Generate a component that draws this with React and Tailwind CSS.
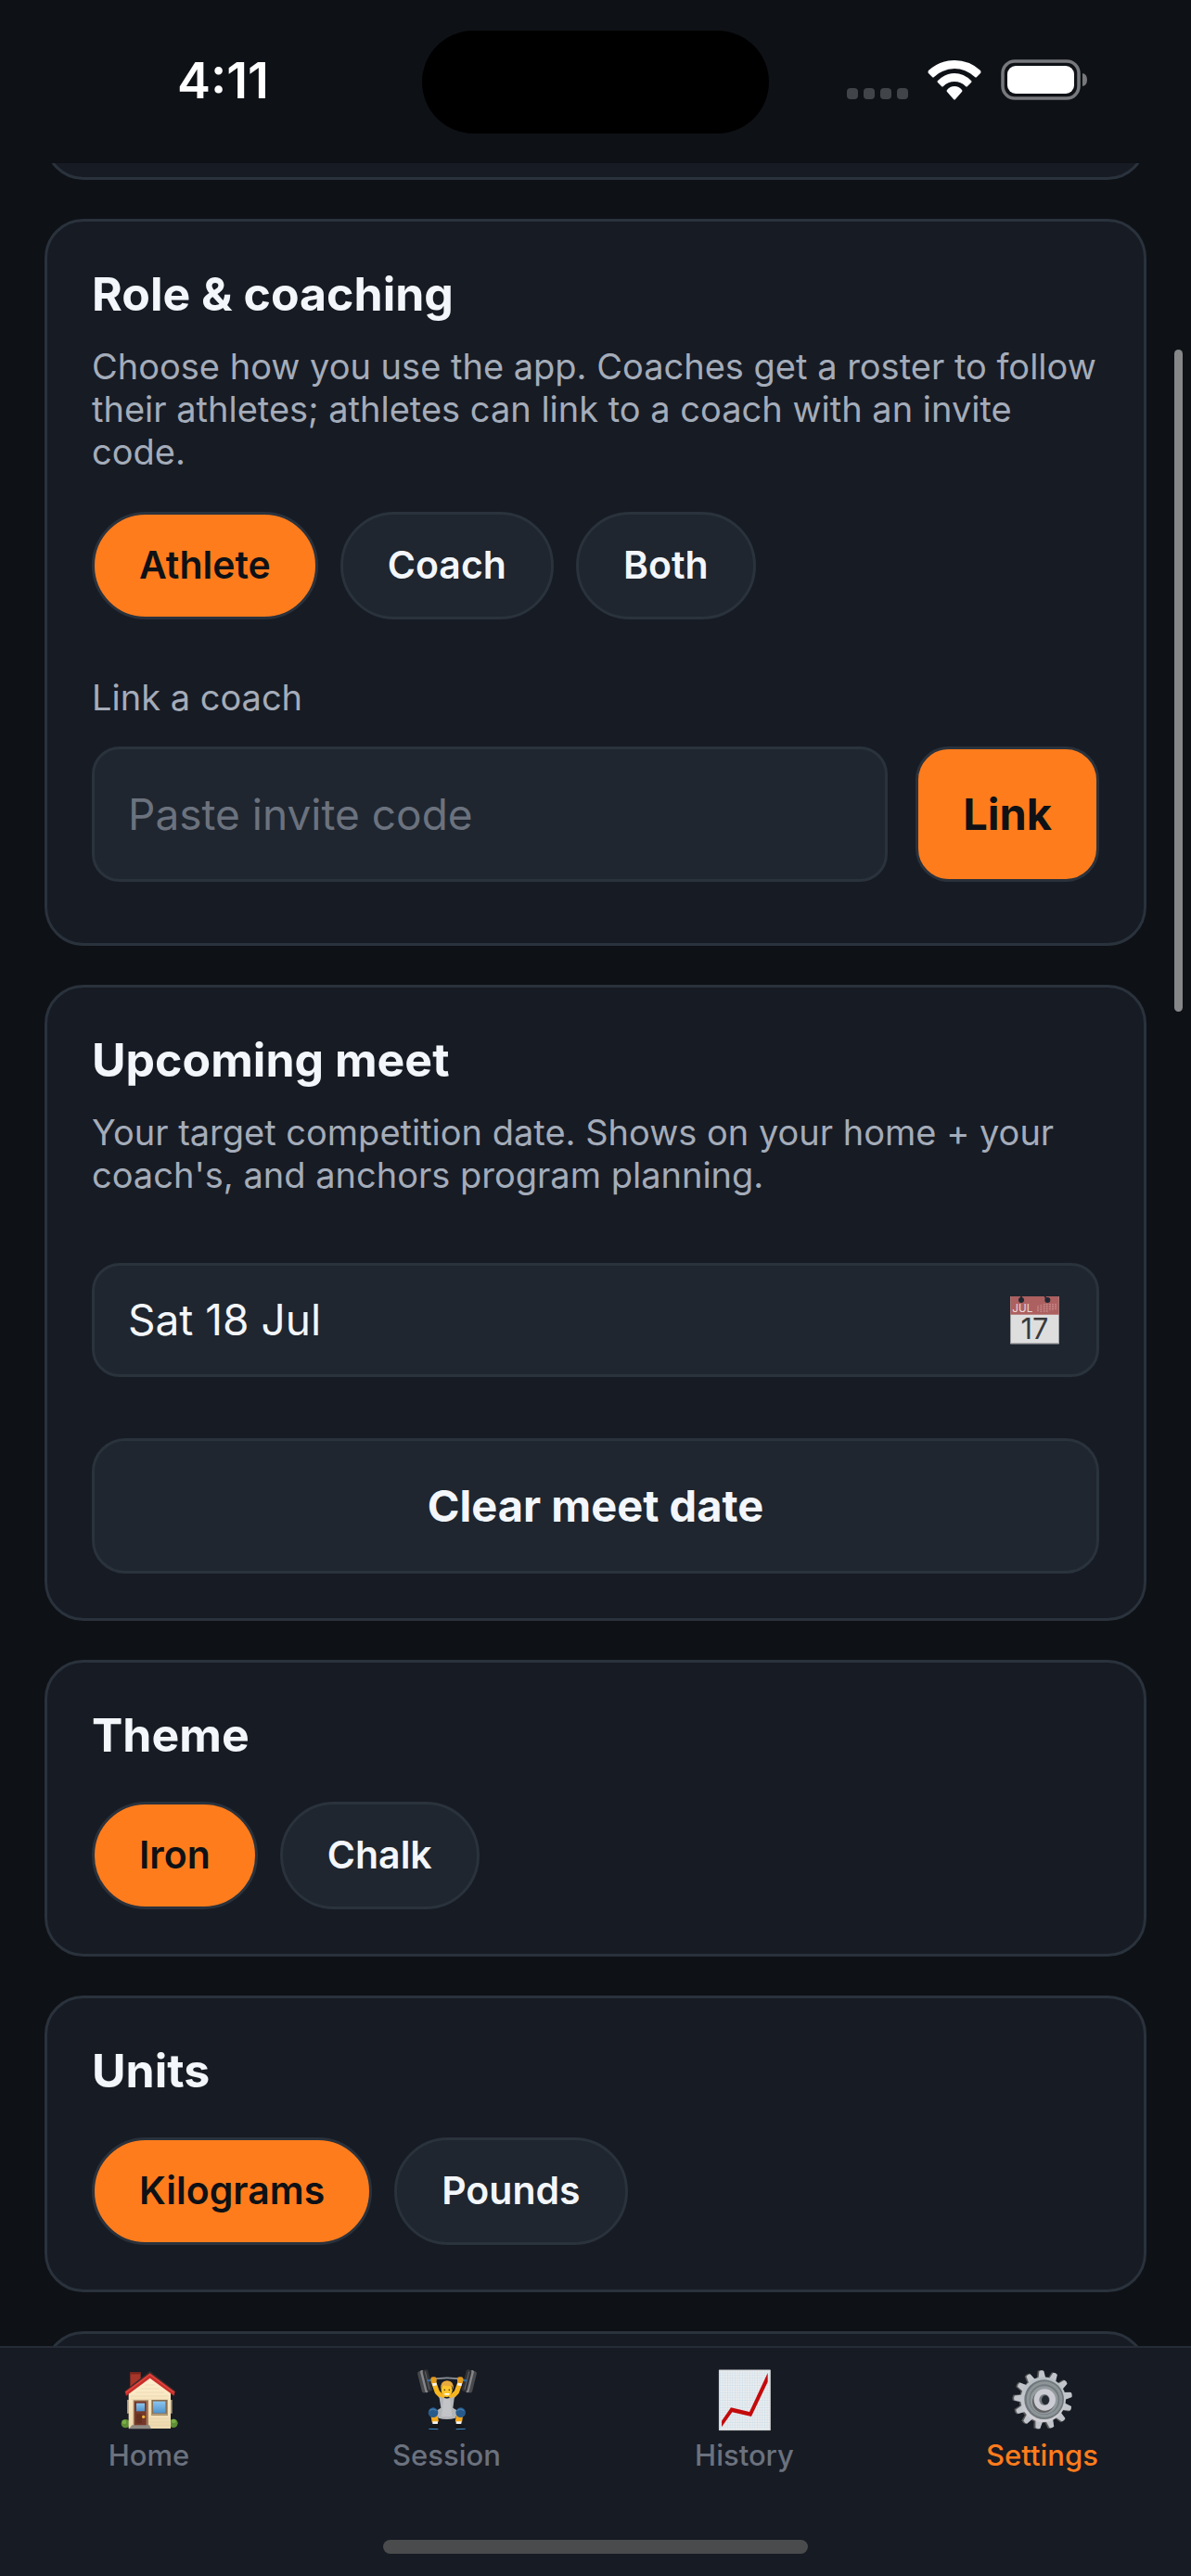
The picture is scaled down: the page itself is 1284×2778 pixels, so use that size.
import { useState } from "react";

const TABS = [
  { id: "home", label: "Home", Icon: HouseIcon },
  { id: "session", label: "Session", Icon: LifterIcon },
  { id: "history", label: "History", Icon: ChartIcon },
  { id: "settings", label: "Settings", Icon: GearIcon },
];

function HouseIcon() {
  return (
    <svg viewBox="108 162 204 204" className="size-[68px]" aria-hidden="true">
      <defs>
        <linearGradient id="wall" x1="0" y1="0" x2="0" y2="1">
          <stop offset="0" stopColor="#fff0cf" />
          <stop offset="1" stopColor="#eed9ae" />
        </linearGradient>
        <linearGradient id="glass" x1="0" y1="0" x2="0" y2="1">
          <stop offset="0" stopColor="#8cc5ef" />
          <stop offset="1" stopColor="#4f93cc" />
        </linearGradient>
      </defs>
      <circle cx="133" cy="341" r="14" fill="#5d8f35" />
      <circle cx="288" cy="340" r="14" fill="#5d8f35" />
      <circle cx="129" cy="336" r="7" fill="#79ad48" />
      <circle cx="289" cy="333" r="7" fill="#79ad48" />
      <path d="M148 175h34v50h-34z" fill="#a83529" />
      <path d="M148 175h34v6h-34z" fill="#7c231c" />
      <path d="M138 264h146v44H138z" fill="#a8977a" />
      <path d="M143 236 212 186l67 50v121H143z" fill="url(#wall)" />
      <path d="M150 252h122M150 262h122M182 228h60M166 240h92M196 216h32M205 325h72M205 336h72M205 346h72" stroke="#dfcca6" strokeWidth="1.5" />
      <path d="M131 235 212 170l82 65v6l-82-56-81 56z" fill="#2d2a2b" />
      <path d="m131 238 81-61 81 61-3 13-78-57-77 57z" fill="#c9302b" />
      <path d="m135 240 77-58 77 58" fill="none" stroke="#e8534a" strokeWidth="3" />
      <path d="M158 265h49v86h-49z" fill="#a27b5a" />
      <path d="M162 269h38v79h-38z" fill="#75382a" />
      <path d="M168 275h27v26h-27z" fill="url(#glass)" />
      <path d="M168 310h18v30h-18z" fill="#65301f" />
      <circle cx="191" cy="319" r="5" fill="#f2b632" />
      <path d="M217 264h52v51h-52z" fill="#8a7052" />
      <path d="M222 269h40v38h-40z" fill="url(#glass)" />
      <path d="M218 309h50v5h-50z" fill="#b69f79" />
      <path d="M154 346h56l6 12h-72z" fill="#8f8a82" />
    </svg>
  );
}

function LifterIcon() {
  return (
    <svg viewBox="114 162 204 204" className="size-[68px]" aria-hidden="true">
      <path d="M150 202q66-18 132 0" fill="none" stroke="#8c9197" strokeWidth="5" />
      <g transform="rotate(-14 144 204)">
        <rect x="127" y="168" width="16" height="72" rx="7" fill="#48494c" />
        <rect x="137" y="167" width="10" height="74" rx="4" fill="#84868a" />
        <rect x="144" y="168" width="18" height="72" rx="7" fill="#323336" />
        <rect x="151" y="174" width="3" height="60" rx="1" fill="#626469" />
      </g>
      <g transform="rotate(14 288 204)">
        <rect x="289" y="168" width="16" height="72" rx="7" fill="#48494c" />
        <rect x="285" y="167" width="10" height="74" rx="4" fill="#84868a" />
        <rect x="270" y="168" width="18" height="72" rx="7" fill="#323336" />
        <rect x="278" y="174" width="3" height="60" rx="1" fill="#626469" />
      </g>
      <path d="M153 202l14-2M265 200l14 2" stroke="#2c6cab" strokeWidth="7" />
      <path d="m172 205 12 34 20 20M259 205l-12 34-20 20" fill="none" stroke="#f7b51e" strokeWidth="16" strokeLinejoin="round" />
      <path d="m169 215 13-3M250 212l13 3" stroke="#f4f4f4" strokeWidth="9" />
      <rect x="163" y="190" width="19" height="20" rx="7" fill="#e39a1b" />
      <rect x="249" y="190" width="19" height="20" rx="7" fill="#e39a1b" />
      <path d="m172 300 6 36M259 300l-6 36" stroke="#f5a81c" strokeWidth="22" />
      <path d="M190 252q26 16 50 0l-5 38 16 10-8 23q-28 8-55 0l-8-23 16-10z" fill="#b4b6ba" />
      <path d="M205 256q11 9 20 0l7 62h-34z" fill="#c8cacd" opacity=".7" />
      <circle cx="171" cy="305" r="16" fill="#285b8b" />
      <circle cx="260" cy="305" r="16" fill="#285b8b" />
      <path d="M160 299q10-9 21 0M249 299q10-9 21 0" fill="none" stroke="#4181b5" strokeWidth="4" />
      <path d="M169 334h17v8h-17zM245 334h17v8h-17z" fill="#f3f3f3" />
      <path d="M157 357q2-13 30-16l4 8-8 10zM275 357q-2-13-30-16l-4 8 8 10z" fill="#171719" />
      <path d="m157 358 30 1M275 358l-30 1" stroke="#3a8acb" strokeWidth="3" />
      <ellipse cx="215" cy="232" rx="18" ry="23" fill="#fdc52b" />
      <path d="M196 230q-3-27 20-28 23 1 20 28l-5-12q-17 4-29-2z" fill="#e9aa3d" />
      <circle cx="208" cy="232" r="2.500" fill="#503618" />
      <circle cx="223" cy="232" r="2.500" fill="#503618" />
      <path d="M208 243h15v5h-15z" fill="#fff" />
    </svg>
  );
}

function ChartIcon() {
  return (
    <svg viewBox="115 162 204 204" className="size-[68px]" aria-hidden="true">
      <defs>
        <pattern id="grid" width="8" height="8" patternUnits="userSpaceOnUse">
          <path d="M0 0H8M0 0V8" stroke="#c3d9e8" strokeWidth="2.500" />
        </pattern>
      </defs>
      <path d="M133 167h167v196H133z" fill="#eceeef" />
      <path d="M136 170h161v190H136z" fill="url(#grid)" />
      <path d="M134 168h165v194H134z" fill="none" stroke="#c5c9cc" strokeWidth="2" />
      <path d="M142 332 172 289l60 14 59-126v29l-53 112-62-14-34 48z" fill="#c40a0c" />
    </svg>
  );
}

function GearIcon() {
  const teeth = [0, 28, 55, 83, 111, 138, 166, 194, 222, 249, 277, 305, 332];
  return (
    <svg viewBox="119 162 204 204" className="size-[68px]" aria-hidden="true">
      <defs>
        <linearGradient id="steel" x1="0" y1="0" x2="0" y2="1">
          <stop offset="0" stopColor="#b4bcc2" />
          <stop offset="1" stopColor="#d2d0d7" />
        </linearGradient>
      </defs>
      <g fill="#59595a">
        {teeth.map((a) => (
          <path key={a} d="m206 196 4-26q9-4 18 0l4 26z" transform={`rotate(${a - 3} 219 264)`} />
        ))}
        <circle cx="219" cy="265" r="74" />
      </g>
      <g fill="#c1c5cb">
        {teeth.map((a) => (
          <path key={a} d="m211 196 4-25q8-4 15 0l5 25z" transform={`rotate(${a - 3} 223 264)`} />
        ))}
      </g>
      <circle cx="223" cy="263" r="73" fill="url(#steel)" />
      <circle cx="226" cy="263" r="64" fill="#6f777b" />
      <circle cx="227" cy="263" r="58" fill="#8d9599" />
      <circle cx="227" cy="263" r="49" fill="#737b80" />
      <circle cx="226" cy="265" r="45" fill="#949b9f" />
      <circle cx="224" cy="270" r="36" fill="#626365" />
      <circle cx="228" cy="264" r="35" fill="#cccdd4" />
      <ellipse cx="227" cy="264" rx="17" ry="18" fill="#777c80" />
      <ellipse cx="230" cy="265" rx="12" ry="15" fill="#242a32" />
    </svg>
  );
}

function CalendarIcon() {
  return (
    <svg viewBox="147 171 174 162" className="h-[54px] w-[58px]" aria-hidden="true">
      <path d="M151 174h157v154H151z" fill="#dedede" />
      <path d="M151 324h157v4H151z" fill="#aaabac" />
      <path d="M151 174h157v59H151z" fill="#ad6060" />
      <circle cx="186" cy="186" r="9" fill="#202832" />
      <circle cx="271" cy="186" r="9" fill="#202832" />
      <path d="M186 174v12M262 174l9 12" stroke="#202832" strokeWidth="5" />
      <path d="M240 205v20M250 202v23M260 198v27M269 198v27M279 198v22M288 198v22M297 198v20" stroke="#c98f8f" strokeWidth="5" strokeDasharray="3 2" />
      <text x="157" y="225" fontSize="35" className="fill-[#eadada] font-['Inter',sans-serif]">JUL</text>
      <text x="229" y="312" fontSize="92" textAnchor="middle" className="fill-[#3a3a3a] font-['Inter',sans-serif]">17</text>
    </svg>
  );
}

function StatusBar() {
  return (
    <header className="grid h-[176px] shrink-0 grid-cols-[1fr_374px_1fr] pt-[33px]">
      <time className="mt-[22px] ml-[26px] justify-self-center text-[54px] leading-[64px] font-semibold text-white">4:11</time>
      <div className="h-[111px] rounded-full bg-black" />
      <div className="mt-[30px] mr-[111px] flex h-[46px] items-center justify-end gap-[21px]">
        <svg viewBox="0 0 66 46" className="h-[46px] w-[66px]" fill="#414448" aria-hidden="true">
          <rect x="0" y="32" width="12" height="12" rx="4" />
          <rect x="18" y="32" width="12" height="12" rx="4" />
          <rect x="36" y="32" width="12" height="12" rx="4" />
          <rect x="54" y="32" width="12" height="12" rx="4" />
        </svg>
        <svg viewBox="0 0 58 46" className="h-[46px] w-[58px]" fill="#fff" aria-hidden="true">
          <path d="M1 16q-1-1 0-3Q13 2 29 2t28 11q1 2 0 3l-4 4q-1 1-2 0Q41 11 29 11T7 20q-1 1-2 0z" />
          <path d="M11 26q-1-1 0-2 8-8 18-8t18 8q1 1 0 2l-4 4q-1 1-2 0-5-5-12-5t-12 5q-1 1-2 0z" />
          <path d="M21 36q-1-1 0-2 3-4 8-4t8 4q1 1 0 2l-7 8q-1 1-2 0z" />
        </svg>
        <svg viewBox="0 0 94 46" className="h-[46px] w-[94px]" aria-hidden="true">
          <rect x="2" y="3" width="82" height="40" rx="13" fill="none" stroke="#77787c" strokeWidth="3.500" />
          <rect x="7" y="8" width="72" height="30" rx="9" fill="#fff" />
          <path d="M88 16q5 1 5 7t-5 7z" fill="#77787c" />
        </svg>
      </div>
    </header>
  );
}

function Card({ title, children }) {
  return (
    <section className="shrink-0 rounded-[42px] border-3 border-[#2a323c] bg-[#171b24] p-12">
      <h2 className="text-[50px] leading-[60px] font-bold">{title}</h2>
      {children}
    </section>
  );
}

function Description({ children }) {
  return <p className="mt-[25px] text-[38px] leading-[46px] text-[#a4acb9]">{children}</p>;
}

function Pills({ options, value, onChange }) {
  return (
    <div className="mt-[42px] flex flex-wrap gap-6">
      {options.map((option) => (
        <button
          key={option}
          type="button"
          aria-pressed={option === value}
          onClick={() => onChange(option)}
          className={
            option === value
              ? "h-[116px] rounded-full border-3 border-[#2a323c] bg-[#ff7c1c] px-12 text-[41px] font-semibold text-[#0e1116]"
              : "h-[116px] rounded-full border-3 border-[#2a323c] bg-[#1f262f] px-12 text-[41px] font-semibold"
          }
        >
          {option}
        </button>
      ))}
    </div>
  );
}

function App() {
  const [role, setRole] = useState("Athlete");
  const [code, setCode] = useState("");
  const [meetDate, setMeetDate] = useState("Sat 18 Jul");
  const [theme, setTheme] = useState("Iron");
  const [units, setUnits] = useState("Kilograms");
  const [tab, setTab] = useState("settings");

  return (
    <div className="relative flex h-screen flex-col overflow-hidden bg-[#0e1116] font-['Inter',sans-serif] text-[#f3f6fa]">
      <StatusBar />

      <main className="flex min-h-0 flex-1 flex-col gap-[42px] overflow-hidden px-12">
        {/* end of the card that is scrolled under the status bar */}
        <div className="-mt-20 h-[98px] shrink-0 rounded-[42px] border-3 border-[#2a323c] bg-[#171b24]" />

        <Card title="Role & coaching">
          <Description>
            Choose how you use the app. Coaches get a roster to follow their athletes; athletes can link to a coach with an invite code.
          </Description>
          <Pills options={["Athlete", "Coach", "Both"]} value={role} onChange={setRole} />
          <label htmlFor="invite" className="mt-[61px] block text-[38px] leading-[46px] text-[#a4acb9]">
            Link a coach
          </label>
          <div className="mt-[30px] mb-[18px] flex gap-[30px]">
            <input
              id="invite"
              type="text"
              value={code}
              onChange={(e) => setCode(e.target.value)}
              placeholder="Paste invite code"
              className="h-[146px] min-w-0 flex-1 rounded-[30px] border-3 border-[#2a323c] bg-[#1f262f] px-9 text-[46px] placeholder:text-[#6b727e]"
            />
            <button type="button" className="rounded-[36px] border-3 border-[#2a323c] bg-[#ff7c1c] px-12 text-[47px] font-bold text-[#0e1116]">
              Link
            </button>
          </div>
        </Card>

        <Card title="Upcoming meet">
          <Description>
            Your target competition date. Shows on your home + your coach's, and anchors program planning.
          </Description>
          <button
            type="button"
            className="mt-[72px] flex h-[123px] w-full items-center justify-between rounded-[30px] border-3 border-[#2a323c] bg-[#1f262f] px-9 text-[46px]"
          >
            {meetDate}
            <CalendarIcon />
          </button>
          <button
            type="button"
            onClick={() => setMeetDate("")}
            className="mt-[66px] h-[146px] w-full rounded-[36px] border-3 border-[#2a323c] bg-[#1f262f] text-[47px] font-bold"
          >
            Clear meet date
          </button>
        </Card>

        <Card title="Theme">
          <Pills options={["Iron", "Chalk"]} value={theme} onChange={setTheme} />
        </Card>

        <Card title="Units">
          <Pills options={["Kilograms", "Pounds"]} value={units} onChange={setUnits} />
        </Card>

        <div className="h-24 shrink-0 rounded-[42px] border-3 border-[#2a323c] bg-[#171b24]" />
      </main>

      {/* scroll thumb over the list */}
      <div className="absolute top-[377px] right-[9px] h-[714px] w-[9px] rounded-full bg-[#858789]" />

      <footer className="shrink-0 border-t-2 border-[#252c36] bg-[#171b24] pt-[22px] pb-6">
        <nav className="grid grid-cols-4">
          {TABS.map(({ id, label, Icon }) => (
            <button
              key={id}
              type="button"
              onClick={() => setTab(id)}
              className={
                id === tab
                  ? "flex flex-col items-center gap-2 text-[31px] leading-9 font-medium text-[#ff7c1c]"
                  : "flex flex-col items-center gap-2 text-[31px] leading-9 font-medium text-[#6b727e]"
              }
            >
              <Icon />
              {label}
            </button>
          ))}
        </nav>
        <div className="mx-auto mt-[73px] h-[15px] w-[458px] rounded-full bg-[#4a4b4d]" />
      </footer>
    </div>
  );
}

export default App;
